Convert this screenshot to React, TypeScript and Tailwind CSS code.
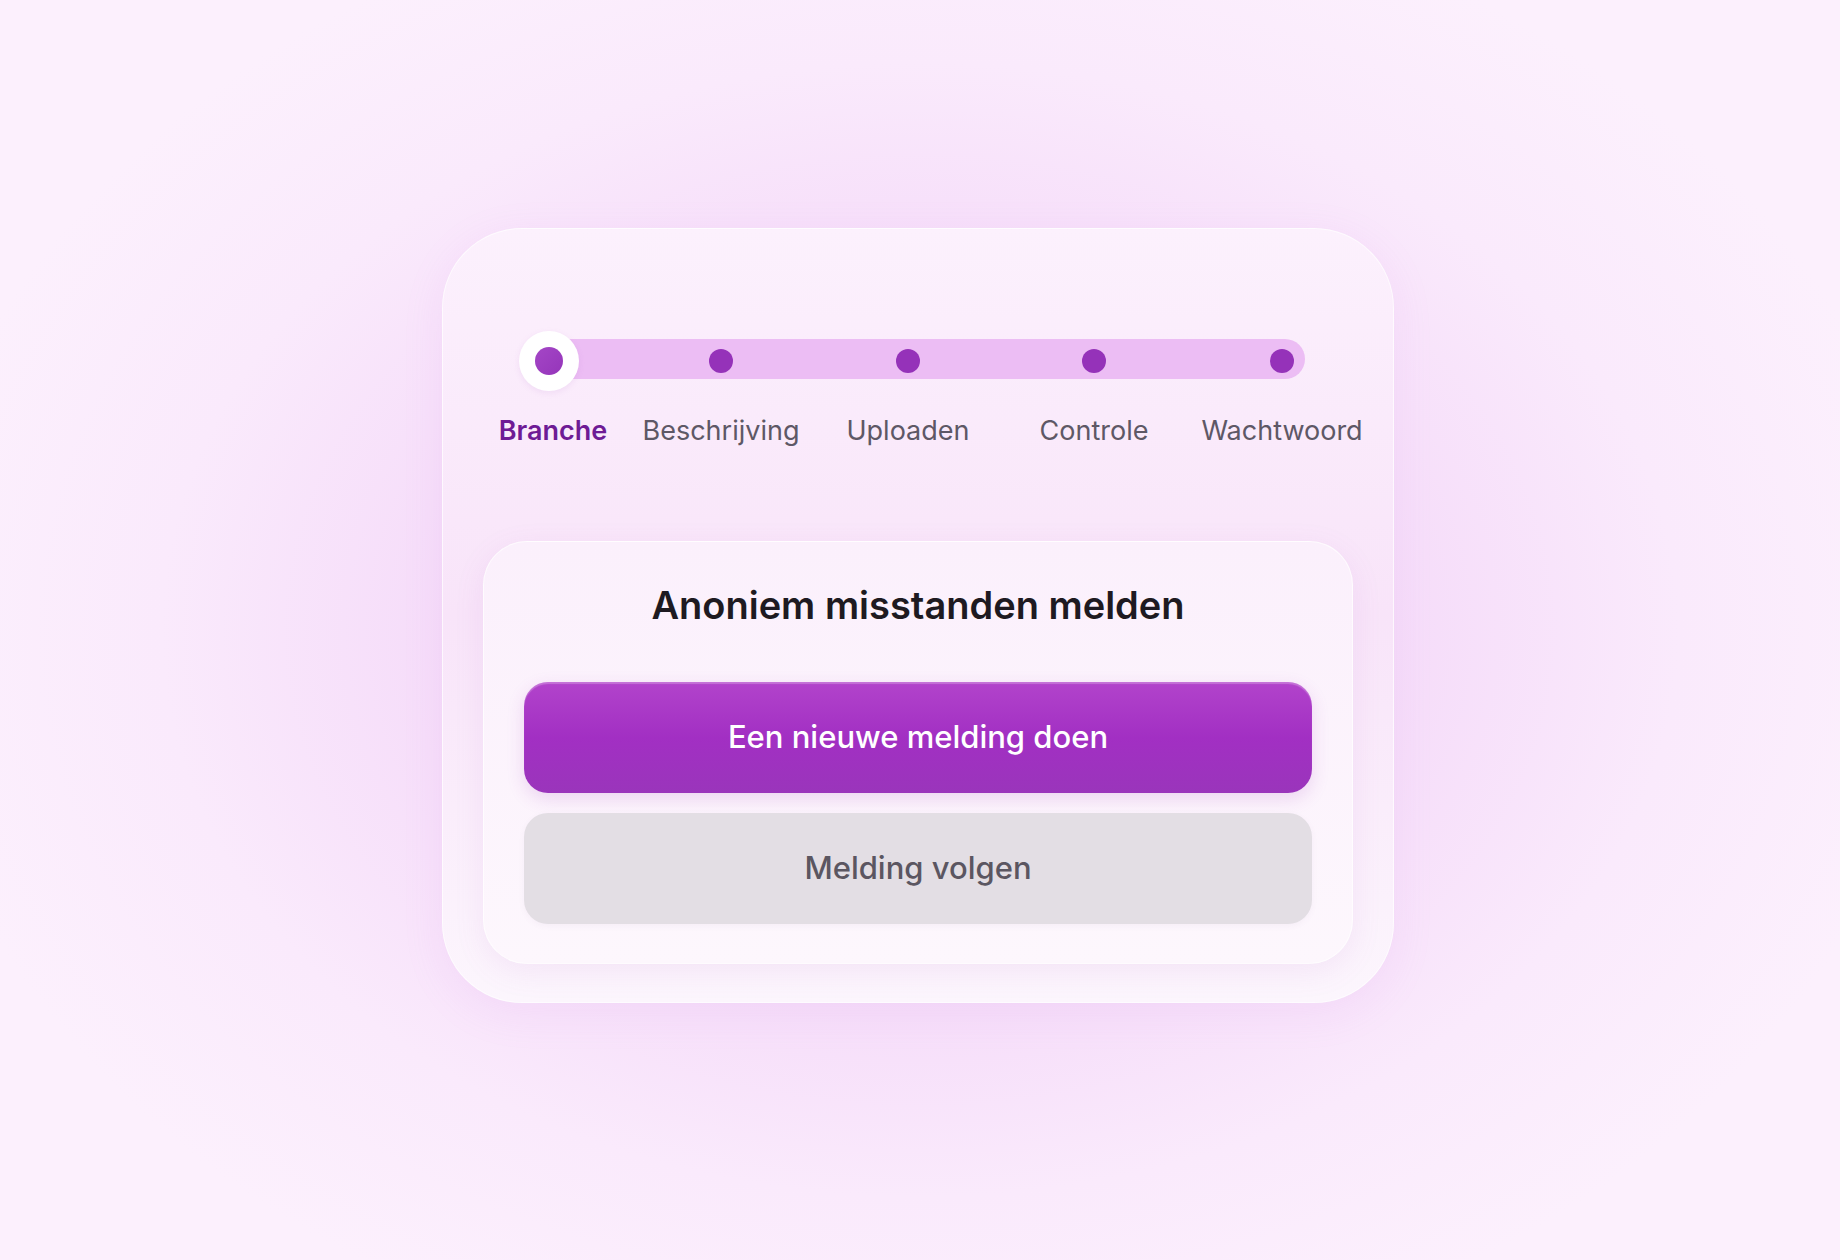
import React from "react";

const steps = [
  { label: "Branche", active: true },
  { label: "Beschrijving" },
  { label: "Uploaden" },
  { label: "Controle" },
  { label: "Wachtwoord" },
];

export default function App() {
  return (
    <div
      className="min-h-screen w-full flex justify-center pt-[228px] bg-[radial-gradient(ellipse_55%_60%_at_50%_50%,#f1d0f8_0%,#f5dbf9_45%,#faeafc_75%,#fcf0fd_100%)]"
      style={{ fontFamily: "Inter, 'Noto Sans', sans-serif" }}
    >
      {/* Outer card */}
      <div className="mr-[4px] w-[952px] h-[775px] rounded-[80px] border border-white/70 bg-gradient-to-b from-[#fcf1fd] via-[#f8e4f9] to-[#fcf6fd] shadow-[0_10px_40px_rgba(210,140,230,0.12)] pt-[102px] px-[40px] pb-[40px]">
        {/* Stepper */}
        <div className="relative ml-[-20px] mr-[-30px]">
          <div className="absolute left-[66px] top-[8px] h-[40px] w-[776px] rounded-full bg-[#ecbdf4]"></div>
          <div className="relative grid grid-cols-[172px_172px_202px_170px_206px]">
            {steps.map((s) => (
              <div key={s.label} className="flex flex-col items-center">
                <div className="h-[60px] flex items-center justify-center">
                  {s.active ? (
                    <div className="w-[60px] h-[60px] rounded-full bg-white flex items-center justify-center shadow-[0_2px_6px_rgba(160,80,190,0.1)]">
                      <div className="w-[28px] h-[28px] rounded-full bg-gradient-to-br from-[#a446c6] to-[#9535ba]"></div>
                    </div>
                  ) : (
                    <div className="w-[24px] h-[24px] rounded-full bg-[#9532b9]"></div>
                  )}
                </div>
                <span
                  className={`mt-[23px] text-[27px] leading-[34px] ${
                    s.active ? "ml-[8px] font-semibold text-[#6e1b95]" : "text-[#5e5866]"
                  }`}
                >
                  {s.label}
                </span>
              </div>
            ))}
          </div>
        </div>

        {/* Inner card */}
        <div className="mt-[93px] h-[423px] rounded-[44px] border border-white/70 bg-gradient-to-b from-[#fbf0fc] to-[#fdf7fd] shadow-[0_8px_30px_rgba(180,100,200,0.1)] pt-[40px] px-[40px] pb-[39px] flex flex-col">
          <h1 className="text-center text-[38px] leading-[46px] font-semibold text-[#1e1a21]">
            Anoniem misstanden melden
          </h1>
          <button className="mt-[54px] h-[111px] w-full rounded-[24px] bg-gradient-to-b from-[#b243cb] via-[#a22fc3] to-[#9a35bb] shadow-[inset_0_2px_1px_rgba(255,255,255,0.25),0_6px_18px_rgba(150,50,180,0.16)] text-white text-[31px] font-medium">
            Een nieuwe melding doen
          </button>
          <button className="mt-[20px] h-[112px] w-full rounded-[24px] bg-[#e3dee4] shadow-[0_2px_6px_rgba(120,80,140,0.05)] text-[#5b5661] text-[31px] font-medium">
            Melding volgen
          </button>
        </div>
      </div>
    </div>
  );
}
